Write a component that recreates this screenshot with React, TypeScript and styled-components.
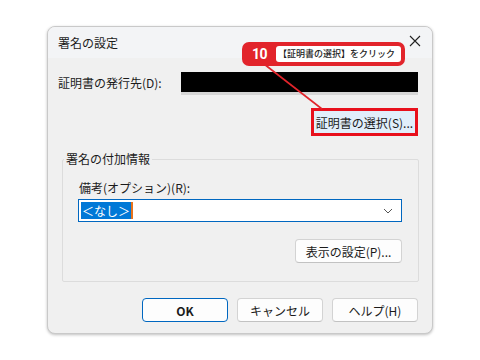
import React from "react";
import styled, { createGlobalStyle } from "styled-components";

const Global = createGlobalStyle`
  html, body { margin: 0; padding: 0; background: #ffffff; }
  body { font-family: "Noto Sans CJK JP", "Noto Sans", sans-serif; color: #1b1b1b; }
  * { box-sizing: border-box; }
`;

const Page = styled.div`
  width: 480px;
  height: 360px;
  padding: 26px 0 0 47px;
  position: relative;
`;

const Dialog = styled.div`
  width: 386px;
  height: 308px;
  background: #f0f0f0;
  border: 1px solid #c9c9c9;
  border-radius: 8px;
  box-shadow: 0 1px 3px rgba(0, 0, 0, 0.25);
  display: flex;
  flex-direction: column;
  position: relative;
  overflow: hidden;
`;

const TitleBar = styled.div`
  height: 31px;
  display: flex;
  align-items: center;
  justify-content: space-between;
  padding: 0 10px 0 10px;
  background: #f3f4f6;
  font-size: 12px;
`;

const Close = styled.div`
  width: 14px;
  height: 14px;
  display: flex;
  align-items: center;
  justify-content: center;
  margin-top: -3px;
`;

const Body = styled.div`
  flex: 1;
  display: flex;
  flex-direction: column;
  padding: 14px 13px 0 10px;
`;

const IssuerRow = styled.div`
  display: flex;
  align-items: center;
  height: 23px;
`;

const Label = styled.span`
  font-size: 12px;
  line-height: 16px;
  white-space: nowrap;
`;

const IssuerLabel = styled(Label)`
  width: 123px;
  margin-top: -1px;
`;

const Redacted = styled.div`
  flex: 1;
  height: 23px;
  background: #000;
  border-bottom: 3px solid #d6d6d6;
  margin-right: 1px;
`;

const RightRow = styled.div<{ $top: number }>`
  display: flex;
  justify-content: flex-end;
  margin-top: ${(p) => p.$top}px;
`;

const Highlight = styled.div`
  border: 3px solid #e8101c;
  margin-right: 1px;
  display: flex;
`;

const Button = styled.button<{ $w: number; $h?: number; $primary?: boolean; $hl?: boolean }>`
  width: ${(p) => p.$w}px;
  height: ${(p) => p.$h ?? 24}px;
  font-family: inherit;
  font-size: 12px;
  font-weight: ${(p) => (p.$primary ? 700 : 400)};
  color: #1b1b1b;
  background: ${(p) => (p.$hl ? "#e1eefa" : "#fdfdfd")};
  border: 1px solid ${(p) => (p.$primary ? "#0067c0" : p.$hl ? "#e1eefa" : "#d3d3d3")};
  border-bottom-color: ${(p) => (p.$primary ? "#0067c0" : p.$hl ? "#e1eefa" : "#c2c2c2")};
  border-radius: ${(p) => (p.$hl ? 0 : 4)}px;
  padding: 0;
  display: flex;
  align-items: center;
  justify-content: center;
`;

const Group = styled.fieldset`
  margin: 15px 0 0 4px;
  padding: 8px 16px 15px 5px;
  border: 1px solid #dcdcdc;
  border-radius: 2px;
  height: 131px;
  display: flex;
  flex-direction: column;
`;

const Legend = styled.legend`
  font-size: 12px;
  padding: 0 2px;
  margin-left: -4px;
  line-height: 16px;
`;

const NoteLabel = styled(Label)`
  margin-left: 11px;
  margin-top: 5px;
`;

const Combo = styled.div`
  margin: 3px 0 0 10px;
  height: 23px;
  border: 1px solid #0067c0;
  background: #fff;
  display: flex;
  align-items: center;
  padding: 0 8px 0 2px;
`;

const Selected = styled.span`
  background: #0078d7;
  color: #fff;
  font-size: 12px;
  line-height: 17px;
  padding: 0 1px;
`;

const Caret = styled.span`
  width: 2px;
  height: 17px;
  background: #e8731c;
`;

const Spacer = styled.div`
  flex: 1;
`;

const Footer = styled.div`
  display: flex;
  justify-content: flex-end;
  gap: 9px;
  margin-top: 16px;
  padding-right: 1px;
`;

const Callout = styled.div`
  position: absolute;
  left: 242px;
  top: 42px;
  width: 163px;
  height: 24px;
  background: #e2242b;
  border-radius: 7px;
  display: flex;
  align-items: center;
  padding: 0 4px 0 10px;
  gap: 9px;
  z-index: 3;
`;

const StepNo = styled.span`
  color: #fff;
  font-family: "Roboto", "Liberation Sans", sans-serif;
  font-weight: 700;
  font-size: 14px;
  letter-spacing: -0.5px;
`;

const CalloutText = styled.span`
  flex: 1;
  height: 16px;
  background: #fff;
  border-radius: 3px;
  font-size: 9px;
  font-weight: 500;
  line-height: 16px;
  padding-left: 2px;
  white-space: nowrap;
  color: #222;
`;

const Leader = styled.svg`
  position: absolute;
  left: 0;
  top: 0;
  z-index: 2;
  pointer-events: none;
`;

export default function App() {
  return (
    <Page>
      <Global />
      <Dialog>
        <TitleBar>
          <span>署名の設定</span>
          <Close>
            <svg width="12" height="12" viewBox="0 0 12 12">
              <path d="M1 1 L11 11 M11 1 L1 11" stroke="#222" strokeWidth="1.1" />
            </svg>
          </Close>
        </TitleBar>
        <Body>
          <IssuerRow>
            <IssuerLabel>証明書の発行先(D):</IssuerLabel>
            <Redacted />
          </IssuerRow>
          <RightRow $top={13}>
            <Highlight>
              <Button $w={101} $h={22} $hl>
                証明書の選択(S)...
              </Button>
            </Highlight>
          </RightRow>
          <Group>
            <Legend>署名の付加情報</Legend>
            <NoteLabel>備考(オプション)(R):</NoteLabel>
            <Combo>
              <Selected>＜なし＞</Selected>
              <Caret />
              <Spacer />
              <svg width="10" height="6" viewBox="0 0 10 6">
                <path d="M1 1 L5 5 L9 1" stroke="#555" strokeWidth="1" fill="none" />
              </svg>
            </Combo>
            <RightRow $top={17}>
              <Button $w={107}>表示の設定(P)...</Button>
            </RightRow>
          </Group>
          <Footer>
            <Button $w={86} $primary>OK</Button>
            <Button $w={86}>キャンセル</Button>
            <Button $w={86}>ヘルプ(H)</Button>
          </Footer>
        </Body>
      </Dialog>
      <Leader width="480" height="360">
        <line x1="264" y1="64" x2="322" y2="109" stroke="#e2242b" strokeWidth="1.6" />
      </Leader>
      <Callout>
        <StepNo>10</StepNo>
        <CalloutText>【証明書の選択】をクリック</CalloutText>
      </Callout>
    </Page>
  );
}
